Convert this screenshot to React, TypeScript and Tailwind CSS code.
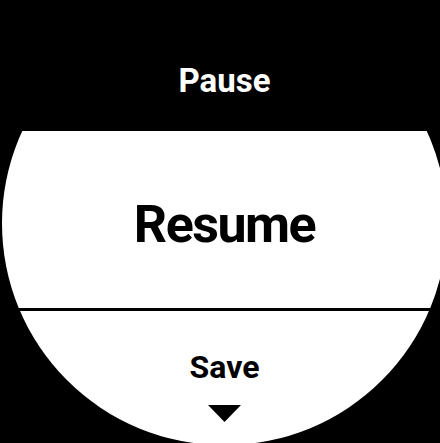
export default function App() {
  return (
    <div className="w-[440px] h-[443px] bg-black overflow-hidden flex" style={{ fontFamily: 'Roboto, "Liberation Sans", sans-serif' }}>
      <div className="ml-[2px] mt-[2px] w-[445px] h-[443px] shrink-0 rounded-full bg-black overflow-hidden flex flex-col">
        <div className="h-[129px] shrink-0 bg-black pt-[62px] flex justify-center">
          <span className="text-white font-bold text-[33px] leading-[33px]">Pause</span>
        </div>
        <div className="h-[177px] shrink-0 bg-white pt-[68px] flex justify-center">
          <span className="text-black font-bold text-[52px] leading-[52px] tracking-[-1.5px]">Resume</span>
        </div>
        <div className="h-[3px] shrink-0 bg-black" />
        <div className="flex-1 bg-white flex flex-col items-center pt-[40px]">
          <span className="text-black font-bold text-[32px] leading-[32px]">Save</span>
          <svg width="33" height="17" viewBox="0 0 33 17" className="mt-[22px]">
            <polygon points="0,0 33,0 16.5,17" fill="#000" />
          </svg>
        </div>
      </div>
    </div>
  );
}
